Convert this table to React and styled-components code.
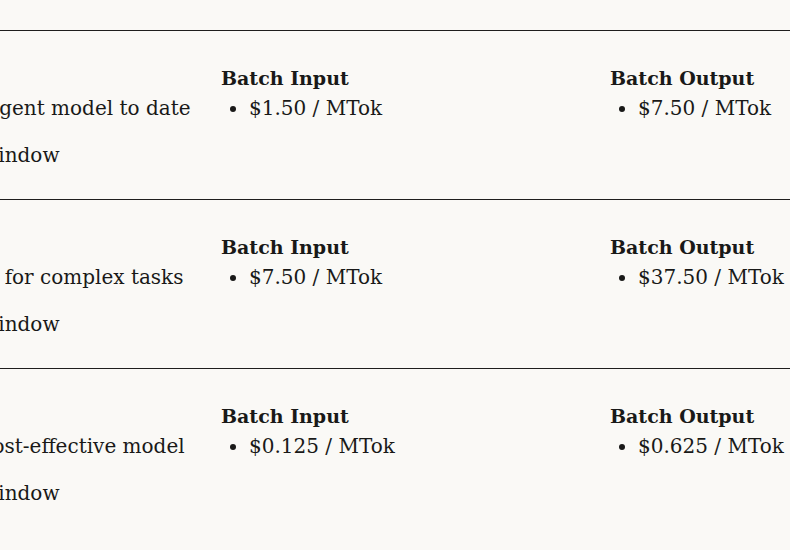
import React from 'react';
import styled, { createGlobalStyle } from 'styled-components';

const GlobalStyle = createGlobalStyle`
  html, body {
    margin: 0;
    padding: 0;
    background: #faf9f6;
  }
  body {
    width: 790px;
    height: 550px;
    overflow: hidden;
    font-family: "DejaVu Serif", "Liberation Serif", serif;
    color: #191918;
  }
`;

// the table is wider than the view; its first column is scrolled off to the left
const Table = styled.div`
  margin-left: -160px;
  padding-top: 30px;
`;

const Row = styled.div`
  display: grid;
  grid-template-columns: 381px 389px 389px;
  height: 168px;
  border-top: 1px solid #1f1e1d;
  box-sizing: content-box;
`;

const Cell = styled.div`
  padding-top: 32px;
`;

const Desc = styled.ul`
  list-style: none;
  margin: 0;
  padding: 62px 0 0;
  font-size: 20px;
  line-height: 30px;
  white-space: nowrap;

  li + li {
    margin-top: 17px;
  }
`;

const Heading = styled.h4`
  margin: 0;
  font-size: 19px;
  font-weight: 600;
  line-height: 30px;
`;

const Prices = styled.ul`
  margin: 0;
  padding-left: 28px;
  font-size: 20px;
  line-height: 30px;
  white-space: nowrap;
`;

const models = [
  { desc: 'Our most intelligent model to date', input: '$1.50', output: '$7.50' },
  { desc: 'Powerful model for complex tasks', input: '$7.50', output: '$37.50' },
  { desc: 'Fastest, most cost-effective model', input: '$0.125', output: '$0.625' },
];

function PriceCell({ label, value }) {
  return (
    <Cell>
      <Heading>{label}</Heading>
      <Prices>
        <li>{value} / MTok</li>
      </Prices>
    </Cell>
  );
}

export default function App() {
  return (
    <>
      <GlobalStyle />
      <Table>
        {models.map((m) => (
          <Row key={m.desc}>
            <Desc>
              <li>{m.desc}</li>
              <li>200K context window</li>
            </Desc>
            <PriceCell label="Batch Input" value={m.input} />
            <PriceCell label="Batch Output" value={m.output} />
          </Row>
        ))}
      </Table>
    </>
  );
}
